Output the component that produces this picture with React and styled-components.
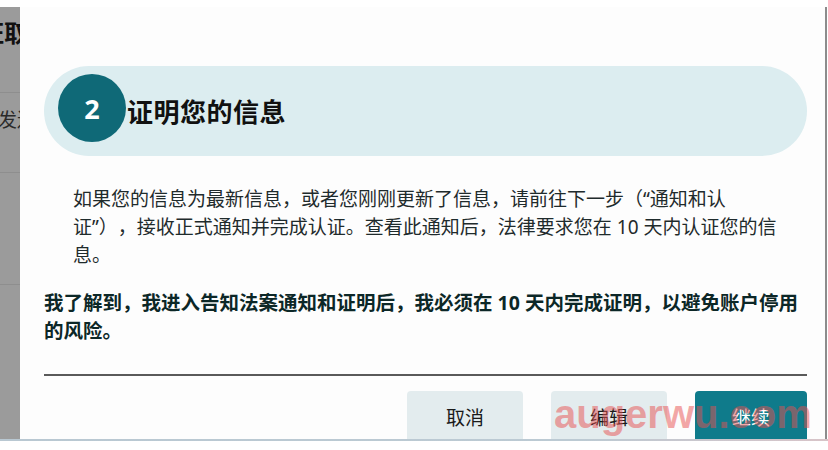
import React from "react";
import styled, { createGlobalStyle } from "styled-components";

const GlobalStyle = createGlobalStyle`
  html, body {
    margin: 0;
    padding: 0;
    background: #ffffff;
    overflow: hidden;
  }
  body {
    font-family: "Noto Sans", "Noto Sans CJK SC", sans-serif;
    text-spacing-trim: space-all;
  }
`;

const Frame = styled.div`
  position: relative;
  width: 828px;
  height: 450px;
  display: flex;
  flex-direction: column;
  background: #ffffff;
`;

const TopGap = styled.div`
  height: 7px;
  flex: none;
`;

const Stage = styled.div`
  height: 432px;
  flex: none;
  display: flex;
  overflow: hidden;
  margin-right: 1px;
`;

const Backdrop = styled.div`
  width: 20px;
  flex: none;
  background: #9b9b9b;
  overflow: hidden;
  display: flex;
  flex-direction: column;
`;

const BackdropRow = styled.div`
  height: ${(p) => p.$h}px;
  flex: none;
  border-bottom: 1px solid #8e8e8e;
  box-sizing: border-box;
  padding-top: ${(p) => p.$top}px;
  margin-left: ${(p) => p.$shift}px;
  white-space: nowrap;
  font-size: ${(p) => (p.$bold ? 24 : 19)}px;
  font-weight: ${(p) => (p.$bold ? 700 : 400)};
  line-height: 28px;
  color: ${(p) => (p.$bold ? "#111" : "#2a2a2a")};
`;

const Modal = styled.div`
  flex: 1;
  background: #fdfdfd;
  border-right: 2px solid #8c8c8c;
  padding: 59px 18px 0 24px;
  display: flex;
  flex-direction: column;

  & > * {
    flex-shrink: 0;
  }
`;

const StepHeader = styled.div`
  height: 90px;
  border-radius: 45px;
  background: #dcedf0;
  display: flex;
  align-items: center;
  padding-left: 14px;
  gap: 1px;
`;

const StepBadge = styled.div`
  width: 68px;
  height: 68px;
  margin-top: -6px;
  border-radius: 50%;
  background: #0f6977;
  color: #ffffff;
  display: flex;
  align-items: center;
  justify-content: center;
  font-size: 27px;
  font-weight: 700;
`;

const StepTitle = styled.h2`
  margin: 0;
  font-size: 26px;
  font-weight: 700;
  color: #111111;
  letter-spacing: 0.5px;
`;

const Body = styled.p`
  margin: 29px 0 0;
  padding: 0 24px 0 29px;
  font-size: 19px;
  line-height: 28px;
  color: #1f2b2c;
`;

const Notice = styled.p`
  margin: 20px 0 0;
  font-size: 19.5px;
  line-height: 28px;
  font-weight: 700;
  color: #0c2727;
`;

const Divider = styled.hr`
  margin: 29px 0 0;
  border: none;
  height: 2px;
  background: #5a5a5a;
`;

const Actions = styled.div`
  display: flex;
  justify-content: flex-end;
  gap: 28px;
  margin-top: 15px;
`;

const Button = styled.button`
  width: ${(p) => (p.$primary ? 112 : 116)}px;
  height: 56px;
  border: none;
  border-radius: 4px;
  padding: 0 0 6px;
  background: ${(p) => (p.$primary ? "#0f7b8b" : "#e3ecee")};
  color: ${(p) => (p.$primary ? "#ffffff" : "#1a1a1a")};
  font-family: "Noto Sans CJK SC", sans-serif;
  font-size: 19px;
  cursor: pointer;
`;

const BottomLine = styled.div`
  height: 2px;
  flex: none;
  background: linear-gradient(90deg, #b9c8d2 0%, #bccad3 70%, #d8c4c8 100%);
`;

const Watermark = styled.div`
  position: absolute;
  left: 554px;
  top: 394px;
  font-family: "Liberation Sans", sans-serif;
  font-size: 40px;
  line-height: 40px;
  font-weight: 700;
  color: rgba(232, 80, 80, 0.5);
  pointer-events: none;
  white-space: nowrap;
`;

export default function App() {
  return (
    <Frame>
      <GlobalStyle />
      <TopGap />
      <Stage>
        <Backdrop>
          <BackdropRow $h={86} $top={12} $shift={-20} $bold>
            证取
          </BackdropRow>
          <BackdropRow $h={80} $top={13} $shift={-2}>
            发送
          </BackdropRow>
          <BackdropRow $h={112} $top={0} $shift={0} />
        </Backdrop>
        <Modal>
          <StepHeader>
            <StepBadge>2</StepBadge>
            <StepTitle>证明您的信息</StepTitle>
          </StepHeader>
          <Body>
            如果您的信息为最新信息，或者您刚刚更新了信息，请前往下一步（“通知和认证”），接收正式通知并完成认证。查看此通知后，法律要求您在 10 天内认证您的信息。
          </Body>
          <Notice>
            我了解到，我进入告知法案通知和证明后，我必须在 10 天内完成证明，以避免账户停用的风险。
          </Notice>
          <Divider />
          <Actions>
            <Button>取消</Button>
            <Button>编辑</Button>
            <Button $primary>继续</Button>
          </Actions>
        </Modal>
      </Stage>
      <BottomLine />
      <Watermark>augerwu.com</Watermark>
    </Frame>
  );
}
